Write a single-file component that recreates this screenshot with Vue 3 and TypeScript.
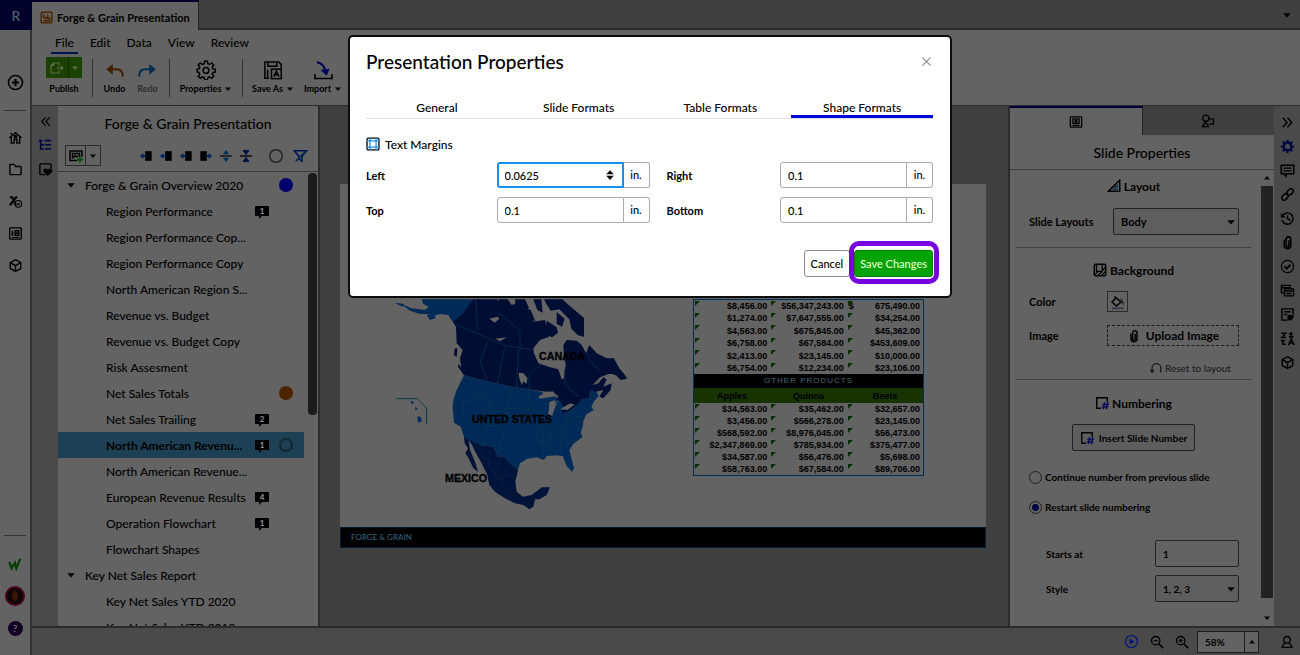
<script setup lang="ts">
import { h, ref } from 'vue'

const glyphs: Record<string, string> = {
  plus: '<circle cx="8" cy="8" r="6.600"/><path d="M8 4.800v6.400M4.800 8h6.400" stroke-width="2"/>',
  home: '<path d="M1.500 8.500 8 2.800l6.500 5.700M3.500 7.500V14h3v-4h3v4h3V7.500M3.500 5V2.800"/><path d="M7 6.200h2v2H7z" fill="currentColor"/>',
  folder: '<path d="M2 3.200q0-.7.7-.7h3.600l2 2.300h5q.7 0 .7.700v7.300q0 .7-.7.7H2.700q-.7 0-.7-.7z"/>',
  formula: '<path d="M2 3.500h2.500l4 8M9.500 2.500 2 12" stroke-width="2.200"/><circle cx="11" cy="10.500" r="3.600" stroke-width="1.200"/><path d="M9.500 10.500l1.200 1.200 2-2.200" stroke-width="1.200"/>',
  calendar: '<rect x="1.800" y="2" width="12.400" height="12" rx="1"/><path d="M4.800 5v5.500M7.800 5h3.700v5.200H7.800zM7.800 7.600h3.700" stroke-width="1.700"/><path d="M4 12.300h8" stroke-width="1"/>',
  cube: '<path d="M8 1.800 13.600 5v6.200L8 14.300l-5.600-3.100V5zM2.400 5 8 8.200 13.600 5M8 8.200v6.100"/>',
  left2: '<path d="M8 3 3.500 8 8 13M13 3 8.500 8l4.500 5"/>',
  right2: '<path d="M3 3l4.500 5L3 13M8 3l4.500 5L8 13"/>',
  tree: '<path d="M1 3h4M3 3v9.500h4M3 7.800h4M7.500 3H15M8 7.800h7M8 12.500h7" stroke-width="1.800"/>',
  heart: '<path d="M8 13.500H3q-1 0-1-1V3q0-1 1-1h10q1 0 1 1v4"/><path d="M10.500 14.800 6 10.600q-1.200-3 1.600-3.600 2-.2 2.900 1.500.9-1.700 2.900-1.500 2.800.6 1.600 3.600z" fill="currentColor" stroke="none"/>',
  slideAdd: '<path d="M9 12.500H2V3h12v6"/><path d="M4.500 10.500v-5h7v3.500M5 10l2-2.500 1.500 1.500 1.500-1.500"/><path d="M12 8.500v6M9 11.500h6" stroke="#0a4d0a" stroke-width="1.900"/>',
  inLeft: '<path d="M7 2.500h7.500v11H7z" fill="currentColor" stroke="none"/><path d="M8 8H4" stroke="#00245e" stroke-width="2"/><path d="M5 4.500v7L1 8z" fill="#00245e" stroke="none"/>',
  inRight: '<path d="M1.500 2.500H9v11H1.500z" fill="currentColor" stroke="none"/><path d="M8 8h4" stroke="#00245e" stroke-width="2"/><path d="M11 4.500v7L15 8z" fill="#00245e" stroke="none"/>',
  expand: '<path d="M1 8h14" stroke-width="1.300"/><path d="M8 1 11.500 6h-7zM8 15l3.500-5h-7z" fill="#003055" stroke="none"/>',
  collapse: '<path d="M1 8h14" stroke-width="1.500"/><path d="M8 7.500 4.500 2h7zM8 8.500 4.500 14h7z" fill="#00124f" stroke="none"/><path d="M4.500 2h7M4.500 14h7" stroke="#00124f"/>',
  circle: '<circle cx="8" cy="8" r="6.300" stroke="#222"/>',
  filter: '<path d="M1.500 3h13L9.500 9v5l-3-2.500V9z" stroke="#00124f" stroke-width="1.700"/><path d="M14 3 3 14" stroke="#003055" stroke-width="2"/>',
  undo: '<path d="M4 7h6q5 0 5 6" stroke-width="1.700"/><path d="M6.500 2.500v9L1 7z" fill="currentColor" stroke="none"/>',
  redo: '<path d="M12 7H6q-5 0-5 6" stroke-width="1.700"/><path d="M9.500 2.500v9L15 7z" fill="currentColor" stroke="none"/>',
  gear: '<path d="M6.900 1h2.200l.4 2 1.400.6 1.700-1.200 1.600 1.600-1.200 1.700.6 1.400 1.900.3v2.200l-1.900.4-.6 1.400 1.200 1.700-1.600 1.600-1.700-1.200-1.400.6-.4 1.900H6.900l-.4-1.900-1.400-.6-1.700 1.200-1.600-1.600L3 11.400 2.400 10 .9 9.600V7.400L2.400 7 3 5.700 1.800 4l1.600-1.600 1.700 1.200L6.500 3z" stroke-width="1.200"/><circle cx="8" cy="8.300" r="2.300" stroke-width="1.200"/>',
  gearSolid: '<circle cx="8" cy="8" r="4" stroke-width="2.500"/><path d="M8 1v2.500M8 12.500V15M1 8h2.500M12.500 8H15M3 3l1.800 1.800M11.200 11.200 13 13M13 3l-1.800 1.800M4.800 11.200 3 13" stroke-width="2.400"/>',
  save: '<path d="M5 14.500H1.500v-13h11l2 2V7M4 1.500V5h7V1.500" stroke-width="1.200"/><rect x="6.800" y="7.300" width="7.800" height="7.600" stroke-width="1.200"/><path d="M8.600 13.300 10.700 8.800l2.100 4.500M9.300 11.800h2.800M3.700 14V7.500" stroke-width="1.200"/>',
  import: '<path d="M.8 11v3.700h14.400V11" stroke-width="1.300"/><path d="M2.500 1Q8.500 2 9.500 8.500" stroke="#00005a" stroke-width="1.800"/><path d="M5.500 7.500 13 6.500l-2.300 6z" fill="#00005a" stroke="none"/>',
  publish: '<path d="M10 5.500V3H4.500L2 5.500V13h8v-2.500M4.500 3v2.500H2" stroke-width="1.200"/><path d="M8 8h5" stroke-width="1.300"/><path d="M12 5.500v5L15 8z" fill="currentColor" stroke="none"/>',
  slide: '<rect x="1.500" y="2.200" width="13" height="11.600" rx=".8"/><rect x="4.500" y="4.500" width="7" height="5"/><circle cx="8" cy="7" r="1"/><path d="M4 11.800h8"/>',
  shapes: '<circle cx="5.500" cy="4.800" r="3.600"/><path d="M5 9l-3.300 5.500h6.800L5 9M8.500 5.500h5.700v6H9"/>',
  comment: '<path d="M1.300 2.500h13.400v9H6.500V14L4 11.500H1.300z" stroke-width="1.600"/><path d="M3.500 5.400h9M3.500 8.400h9" stroke-width="1.400"/>',
  link: '<rect x="7" y="2.800" width="7.500" height="5" rx="2.500" transform="rotate(-45 10.700 5.300)" stroke-width="1.700"/><rect x="1.500" y="8.200" width="7.500" height="5" rx="2.500" transform="rotate(-45 5.200 10.700)" stroke-width="1.700"/>',
  history: '<path d="M2.500 5.500a6 6 0 1 1-.4 4M8 4.500V8l3 2"/><path d="M1 2v5h5z" fill="currentColor" stroke="none"/>',
  clip: '<path d="M4.500 5v6a3.500 3.500 0 0 0 7 0V4.500a2.500 2.500 0 0 0-5 0V11a1.500 1.500 0 0 0 3 0V5.500" stroke-width="1.700"/>',
  check: '<circle cx="8" cy="8" r="6.500" stroke-width="1.300"/><path d="M4.800 8l2.400 2.400 4-4.400" stroke-width="2"/>',
  copy: '<path d="M4 10.500H1.500v-8h9.500v2.300M1.500 5h9"/><rect x="4.700" y="6.200" width="9.800" height="7.500" rx="1"/><path d="M5 8.500h9M7 11.200h5"/>',
  note: '<path d="M8 14H2V2h12v6"/><path d="M4.500 5h7M4.500 8h3" /><path d="M8 8.500h6.500v3l-3 3L8 14z" fill="currentColor" stroke="none"/>',
  translate: '<path d="M1.500 2.500H6L2 7h4.500M9.500 3h4M12 1v6M9.500 6.500h5M3 9v5h3M1 10.500h4.500M9 15l3-6.500L15 15M10 12.800h4" stroke-width="1.600"/>',
  triangle: '<path d="M1.500 14h13V1.500z" stroke-width="1.700"/><path d="M7.500 11.800h4.200V7z" stroke="#0c3950" stroke-width="1.300"/><path d="M4 11.500v2M6.500 9v2M9 7v2" stroke-width="1"/>',
  background: '<rect x="1.500" y="1.500" width="13" height="13" rx="1.500" stroke-width="1.700"/><path d="M4 2v7.500h6.500V2M2.500 13l3.500-3.500M6 14l4.500-4.500M10 14l4-4M11 8l3-3" stroke-width="1.400"/>',
  bucket: '<path d="M4.500 2.500 11 8l-4.500 4L2 8l4.500-4.500" stroke-width="1.500"/><path d="M10.500 3.500q4 4 3.500 8-2.500-2-3.500-5z" fill="#2d2d3a" stroke="none"/><path d="M2 14.300h12" stroke="#3b3b48" stroke-width="2"/>',
  reset: '<path d="M3.500 13V8a4.800 4.800 0 0 1 10 0v5"/><path d="M.5 10h6l-3 4z" fill="currentColor" stroke="none"/>',
  number: '<path d="M7 14H2V2h12v4.500" stroke-width="1.600"/><path d="M9.500 15l1.500-8M13 15l1.500-8M8.300 9.500H16M7.800 12.500h7.500" stroke="#00005a" stroke-width="1.500"/>',
  play: '<circle cx="8" cy="8" r="6.400" stroke-width="1.300"/><path d="M6 4.800v6.400L11.200 8z" fill="currentColor" stroke="none"/>',
  zoomOut: '<circle cx="6.500" cy="6.500" r="4.800"/><path d="M10 10l5 5" stroke-width="2"/><path d="M4.300 6.500h4.400" stroke-width="1.500"/>',
  zoomIn: '<circle cx="6.500" cy="6.500" r="4.800"/><path d="M10 10l5 5" stroke-width="2"/><path d="M4.300 6.500h4.400M6.500 4.300v4.400" stroke-width="1.500"/>',
  person: '<circle cx="8" cy="5.500" r="3.800"/><path d="M5.500 9 2.500 13v1.200h11V13l-3-4"/>',
  margins: '<rect x="1.200" y="1.200" width="13.600" height="13.600" rx="1.500" stroke-width="1.500"/><path d="M4.500 1v14M11.500 1v14M1 4.500h14M1 11.500h14" stroke="#1a93ee" stroke-width="1.500"/>',
  close: '<path d="M3 3l10 10M13 3 3 13" stroke-width="1.300"/>',
  down: '<path d="M2 5h12L8 12z" fill="currentColor" stroke="none"/>',
  up: '<path d="M2 11h12L8 4z" fill="currentColor" stroke="none"/>',
  spin: '<path d="M3 7h10L8 1.500zM3 9h10l-5 5.500z" fill="currentColor" stroke="none"/>',
  doc: '<rect x="1.500" y="1.500" width="13" height="13" rx="1" stroke-width="1.800"/><path d="M4.500 4v4h5V4M6 9h6v3H4" stroke-width="2"/>',
  brand: '<path d="M1.500 5.500 4 13l4-6.500L9.500 13 14 2" stroke-width="2.400"/>',
}

const Icon = (p: { name: string; size?: number }) =>
  h('svg', {
    viewBox: '0 0 16 16',
    width: p.size ?? 14,
    height: p.size ?? 14,
    fill: 'none',
    stroke: 'currentColor',
    'stroke-width': 1.5,
    'aria-hidden': 'true',
    innerHTML: glyphs[p.name],
  })
Icon.props = ['name', 'size']

const menus = ['File', 'Edit', 'Data', 'View', 'Review']
const railIcons = ['home', 'folder', 'formula', 'calendar', 'cube']
const outlineIcons = ['inLeft', 'inLeft', 'inLeft', 'inRight', 'expand', 'collapse']
const rightIcons = ['right2', 'gearSolid', 'comment', 'link', 'history', 'clip', 'check', 'copy', 'note', 'translate', 'cube']

interface Row {
  label: string
  section?: boolean
  notes?: number
  dot?: 'blue' | 'orange' | 'ring'
  active?: boolean
}
const rows: Row[] = [
  { label: 'Forge & Grain Overview 2020', section: true, dot: 'blue' },
  { label: 'Region Performance', notes: 1 },
  { label: 'Region Performance Cop...' },
  { label: 'Region Performance Copy' },
  { label: 'North American Region S...' },
  { label: 'Revenue vs. Budget' },
  { label: 'Revenue vs. Budget Copy' },
  { label: 'Risk Assesment' },
  { label: 'Net Sales Totals', dot: 'orange' },
  { label: 'Net Sales Trailing', notes: 2 },
  { label: 'North American Revenu...', notes: 1, dot: 'ring', active: true },
  { label: 'North American Revenue...' },
  { label: 'European Revenue Results', notes: 4 },
  { label: 'Operation Flowchart', notes: 1 },
  { label: 'Flowchart Shapes' },
  { label: 'Key Net Sales Report', section: true },
  { label: 'Key Net Sales YTD 2020' },
  { label: 'Key Net Sales YTD 2019' },
]

const upper = [
  ['$8,456.00', '$56,347,243.00', '675,490.00'],
  ['$1,274.00', '$7,647,555.00', '$34,254.00'],
  ['$4,563.00', '$675,845.00', '$45,362.00'],
  ['$6,758.00', '$67,584.00', '$453,609.00'],
  ['$2,413.00', '$23,145.00', '$10,000.00'],
  ['$6,754.00', '$12,234.00', '$23,106.00'],
]
const lower = [
  ['$34,563.00', '$35,462.00', '$32,657.00'],
  ['$3,456.00', '$566,278.00', '$23,145.00'],
  ['$568,592.00', '$8,976,045.00', '$56,473.00'],
  ['$2,347,869.00', '$785,934.00', '$375,477.00'],
  ['$34,587.00', '$56,476.00', '$5,698.00'],
  ['$58,763.00', '$67,584.00', '$89,706.00'],
]

const tabs = ['General', 'Slide Formats', 'Table Formats', 'Shape Formats']
const activeTab = ref('Shape Formats')
const margins = ref([
  { label: 'Left', value: '0.0625', focused: true },
  { label: 'Right', value: '0.1', focused: false },
  { label: 'Top', value: '0.1', focused: false },
  { label: 'Bottom', value: '0.1', focused: false },
])
const numbering = ref('restart')
const startsAt = ref('1')
const zoom = ref('58%')
</script>

<template>
  <div class="app">
    <nav class="rail">
      <div class="logo">R</div>
      <button class="ib add" aria-label="Create"><Icon name="plus" :size="17" /></button>
      <div class="rail-group">
        <button v-for="n in railIcons" :key="n" class="ib" :aria-label="n"><Icon :name="n" :size="15" /></button>
      </div>
      <div class="rail-foot">
        <button class="ib brand" aria-label="Workspace"><Icon name="brand" :size="14" /></button>
        <button class="ib" aria-label="Account"><span class="avatar"></span></button>
        <button class="ib" aria-label="Help"><span class="help">?</span></button>
      </div>
    </nav>

    <div class="main">
      <div class="tabbar">
        <a class="doc-tab" href="#"><Icon class="doc-icon" name="doc" :size="13" />Forge &amp; Grain Presentation</a>
        <button class="ib tab-more" aria-label="More tabs"><Icon name="down" :size="10" /></button>
      </div>

      <header class="ribbon">
        <nav class="menus">
          <a v-for="m in menus" :key="m" href="#" :class="{ on: m === 'File' }">{{ m }}</a>
        </nav>
        <div class="tools">
          <button class="tool publish"><span class="pub"><Icon name="publish" :size="16" /><i></i><Icon name="down" :size="8" /></span>Publish</button>
          <hr />
          <button class="tool small undo"><span class="pic"><Icon name="undo" :size="19" /></span>Undo</button>
          <button class="tool small redo"><span class="pic"><Icon name="redo" :size="19" /></span>Redo</button>
          <hr />
          <button class="tool props"><span class="pic"><Icon name="gear" :size="20" /></span><span class="cap">Properties <Icon name="down" :size="8" /></span></button>
          <hr />
          <button class="tool wide"><span class="pic"><Icon name="save" :size="20" /></span><span class="cap">Save As <Icon name="down" :size="8" /></span></button>
          <button class="tool wide"><span class="pic"><Icon name="import" :size="19" /></span><span class="cap">Import <Icon name="down" :size="8" /></span></button>
        </div>
      </header>

      <div class="work">
        <aside class="strip">
          <button class="ib" aria-label="Collapse outline"><Icon name="left2" :size="13" /></button>
          <button class="ib navy" aria-label="Outline"><Icon name="tree" :size="14" /></button>
          <button class="ib" aria-label="Favorites"><Icon name="heart" :size="15" /></button>
        </aside>

        <section class="outline">
          <h2>Forge &amp; Grain Presentation</h2>
          <div class="outline-tools">
            <div class="split">
              <button aria-label="Add slide"><Icon name="slideAdd" :size="16" /></button>
              <button aria-label="Add slide options"><Icon name="down" :size="8" /></button>
            </div>
            <div class="moves">
              <button v-for="(n, i) in outlineIcons" :key="i" class="ib" aria-label="Arrange slide"><Icon :name="n" :size="14" /></button>
            </div>
            <button class="ib status" aria-label="Status"><Icon name="circle" :size="16" /></button>
            <button class="ib" aria-label="Filter"><Icon name="filter" :size="15" /></button>
          </div>
          <div class="tree-wrap">
            <ul class="tree">
              <li v-for="r in rows" :key="r.label" :class="{ section: r.section, active: r.active }">
                <Icon v-if="r.section" class="twist" name="down" :size="10" />
                <a href="#">{{ r.label }}</a>
                <span v-if="r.notes" class="note">{{ r.notes }}</span>
                <span v-if="r.dot" class="dot" :class="r.dot"></span>
              </li>
            </ul>
            <div class="thumb"></div>
          </div>
        </section>

        <main class="canvas">
          <div class="slide">
            <svg class="map" viewBox="0 0 780 690" width="260" height="230" role="img" aria-label="North America">
              <g fill="#002b58">
                <path d="M95 28H250L235 50 200 95 185 92 175 75 150 72 130 78 112 72 90 72 60 62 30 40 62 54 105 60 116 50 100 42Z" />
                <path d="M14 38l28 4-4 8zM110 76l20-4 8 12-18 6z" />
                <path d="M222 256L300 276 365 290 420 298 455 306 470 318 492 316 505 326 495 340 480 350 474 372 486 378 496 350 502 332 518 338 522 358 515 372 540 362 568 340 575 328 598 325 600 300 615 296 626 318 612 334 604 352 612 360 590 372 580 392 578 410 572 428 578 440 550 462 538 480 545 508 552 535 546 545 530 528 518 498 500 496 470 498 462 510 440 502 412 506 390 520 384 540 360 520 345 500 326 502 308 470 275 466 240 450 222 440 212 410 192 398 188 350 190 330 200 300Z" />
                <path d="M62 332l10 4-6 8zM76 350l8 8-8 2zM82 378l10 4 4 12-12 4z" />
              </g>
              <g fill="#000e34">
                <path d="M250 28L320 28 350 50 380 40 405 60 430 95 465 90 470 110 478 140 450 150 430 175 432 190 445 220 480 232 505 238 515 268 522 265 524 240 528 225 522 205 520 165 530 150 560 152 575 165 588 190 598 165 620 190 650 205 672 205 690 240 682 250 655 252 630 262 608 285 625 280 640 262 650 268 640 290 665 280 662 300 640 325 628 320 640 300 618 305 600 300 598 325 575 328 568 340 540 362 515 372 520 350 512 335 500 330 505 318 480 306 455 304 420 298 365 290 300 276 222 256 214 235 210 205 218 180 200 160 198 110 188 95 215 75Z" />
                <path d="M194 176l8-2-2 26-8-4zM206 222l22 30-6 4-18-26z" />
                <path d="M325 28h28l20 28-14 14-24-16zM375 28h30l12 26-20 10-20-14zM400 50l22 10 14 34-26-6zM430 28h24l4 40-16-8zM462 28h55l20 18 45 38v56l-18-4-20-20-6-28-30-30-26 4-14-22zM470 92l30 20 4 16-18 14-20-10zM500 66l24 20-8 24-16-8z" />
                <path d="M658 250l24-22 22 26 8 12-20 4-14-14z" />
              </g>
              <g fill="#636363">
                <path d="M298 86l24-6 6 6-14 12zM316 146l34-4-20 12zM386 248l14 2 12 14-2 18-10-8-4 12-8-20z" />
                <path d="M444 322l22-16 22-2 14 14-26 4-24 4zM478 336l18-6-10 46-10-6zM510 358l30-18 14 4-22 16z" />
              </g>
              <path fill="#001338" d="M222 440L240 450 275 466 308 470 326 502 345 500 360 520 384 540 376 575 380 605 398 620 425 615 445 600 455 592 480 592 470 615 448 628 435 628 430 650 418 658 400 645 375 640 345 625 315 605 298 585 292 555 275 520 258 490 246 465 236 450 240 480 255 515 264 545 250 535 236 505 226 490 234 475 224 460Z" />
              <path fill="none" stroke="#07384e" stroke-width="2" d="M258 28l4 94M198 105l66 26 82 36 80 12M330 72l60 50v58M292 156l-22 60 22 56M344 174l-22 108M386 176l-6 116M452 224l-34 32v42M526 222l-2 60 40 36M594 190l6 24 28 26M196 326l58 12 82 16 84 4M254 280l-6 56M220 336l-4 34 32 56M282 276v48l22 8M362 292l-14 112M416 298v108M302 324l-8 82M250 400l96 10 94 4M340 410l-8 80M294 406l-12 56M420 340h48M420 376h60M440 414l70-4 60-14M440 414v40l40 4M448 442h88M484 414l-4 80M510 430l4 62M546 416l-18 26 6 40M520 386l54-6M560 352l20 30M536 370l-14 60M252 322h56M346 380h72M296 364h50M358 320h58M456 380l4 116M500 380l-14 34M556 402l16 20" />
              <path fill="none" stroke="#062a42" stroke-width="2" d="M264 466l20 40 36 14M300 480l-4 50 40 40M330 510l-16 50 50 50M350 530l-20 70M374 550l-60 20" />
              <path fill="none" stroke="#0c3d4a" stroke-width="3" d="M20 326h62l28 28v48" />
              <g class="countries">
                <text x="447" y="209">CANADA</text>
                <text x="246" y="398">UNTED STATES</text>
                <text x="165" y="577">MEXICO</text>
              </g>
            </svg>

            <table class="figures">
              <tbody class="upper">
                <tr v-for="(r, i) in upper" :key="i">
                  <td v-for="(c, j) in r" :key="j"><b v-if="i === 0 && j === 2">$</b>{{ c }}</td>
                </tr>
              </tbody>
              <tbody>
                <tr class="band"><th colspan="3">OTHER PRODUCTS</th></tr>
                <tr class="heads"><th>Apples</th><th>Quinoa</th><th>Beets</th></tr>
                <tr v-for="(r, i) in lower" :key="i">
                  <td v-for="(c, j) in r" :key="j">{{ c }}</td>
                </tr>
              </tbody>
            </table>
            <footer>FORGE &amp; GRAIN</footer>
          </div>
        </main>

        <section class="panel">
          <div class="panel-tabs">
            <button class="on" aria-label="Slide"><Icon name="slide" :size="14" /></button>
            <button aria-label="Shapes"><Icon name="shapes" :size="14" /></button>
          </div>
          <h2>Slide Properties</h2>
          <div class="panel-body">
            <form class="fields" @submit.prevent>
              <h3><Icon name="triangle" :size="14" />Layout</h3>
              <div class="field layout">
                <label for="layouts">Slide Layouts</label>
                <span class="select"><select id="layouts"><option>Body</option></select><Icon name="down" :size="10" /></span>
              </div>
              <hr />
              <h3 class="bg"><Icon name="background" :size="14" />Background</h3>
              <div class="field color">
                <label for="color">Color</label>
                <span class="slot"><button id="color" class="swatch"><Icon name="bucket" :size="16" /></button></span>
              </div>
              <div class="field image">
                <label for="upload">Image</label>
                <button id="upload" class="upload slot"><Icon name="clip" :size="14" />Upload Image</button>
              </div>
              <a class="reset" href="#"><Icon name="reset" :size="14" />Reset to layout</a>
              <hr />
              <h3 class="num"><Icon name="number" :size="14" />Numbering</h3>
              <button class="insert"><Icon name="number" :size="14" />Insert Slide Number</button>
              <label class="radio"><input v-model="numbering" type="radio" value="continue" />Continue number from previous slide</label>
              <label class="radio"><input v-model="numbering" type="radio" value="restart" />Restart slide numbering</label>
              <div class="field sub starts">
                <label for="starts">Starts at</label>
                <input id="starts" v-model="startsAt" type="text" />
              </div>
              <div class="field sub">
                <label for="style">Style</label>
                <span class="select"><select id="style"><option>1, 2, 3</option></select><Icon name="down" :size="10" /></span>
              </div>
            </form>
            <div class="scroll"><Icon name="up" :size="8" /><div></div><Icon name="down" :size="8" /></div>
          </div>
        </section>

        <aside class="strip right">
          <button v-for="n in rightIcons" :key="n" class="ib" :class="{ navy: n === 'gearSolid' }" :aria-label="n"><Icon :name="n" :size="15" /></button>
        </aside>
      </div>

      <footer class="statusbar">
        <button class="ib play" aria-label="Present"><Icon name="play" :size="15" /></button>
        <button class="ib" aria-label="Zoom out"><Icon name="zoomOut" :size="14" /></button>
        <button class="ib" aria-label="Zoom in"><Icon name="zoomIn" :size="14" /></button>
        <span class="zoom"><input v-model="zoom" aria-label="Zoom" type="text" /><button aria-label="Zoom levels"><Icon name="up" :size="8" /></button></span>
        <button class="ib person" aria-label="Collaborators"><Icon name="person" :size="14" /></button>
      </footer>
    </div>

    <div class="overlay">
      <form class="dialog" role="dialog" aria-labelledby="dlg-title" @submit.prevent>
        <div class="dialog-head">
          <h1 id="dlg-title">Presentation Properties</h1>
          <button type="button" class="ib close" aria-label="Close"><Icon name="close" :size="13" /></button>
        </div>
        <div class="tabs" role="tablist">
          <button v-for="t in tabs" :key="t" type="button" role="tab" :class="{ on: t === activeTab }" @click="activeTab = t">{{ t }}</button>
        </div>
        <h2><Icon name="margins" :size="14" />Text Margins</h2>
        <div class="margins">
          <div v-for="m in margins" :key="m.label" class="margin">
            <label :for="'m-' + m.label">{{ m.label }}</label>
            <span class="measure" :class="{ focused: m.focused }">
              <input :id="'m-' + m.label" v-model="m.value" type="text" />
              <Icon v-if="m.focused" class="spin" name="spin" :size="12" />
              <span class="unit">in.</span>
            </span>
          </div>
        </div>
        <div class="actions">
          <button type="button" class="cancel">Cancel</button>
          <button type="submit" class="save">Save Changes</button>
        </div>
      </form>
    </div>
  </div>
</template>

<style>
body {
  background: #636363;
}
</style>

<style scoped>
* {
  box-sizing: border-box;
}
.app {
  position: relative;
  display: flex;
  height: 100vh;
  overflow: hidden;
  font-family: Lato, "Liberation Sans", sans-serif;
  font-size: 12px;
  font-weight: 500;
  color: #000;
  background: #636363;
}
button,
input,
select {
  margin: 0;
  padding: 0;
  border: 0;
  font: inherit;
  color: inherit;
  background: none;
}
a {
  color: inherit;
  text-decoration: none;
}
h1,
h2,
h3,
ul {
  margin: 0;
  padding: 0;
  font-weight: inherit;
}
svg {
  display: block;
  flex: none;
}
.ib {
  display: flex;
  align-items: center;
  justify-content: center;
  flex: none;
}
.navy {
  color: #000642;
}

/* left rail */
.rail {
  display: flex;
  flex-direction: column;
  flex: none;
  width: 32px;
  border-right: 2px solid #333;
}
.logo {
  display: flex;
  align-items: center;
  justify-content: center;
  width: 32px;
  height: 30px;
  background: #00002a;
  color: #4c6470;
  font-size: 14px;
}
.add {
  height: 80px;
  margin: 12px 4px 0;
}
.rail-group {
  display: flex;
  flex-direction: column;
  margin: -12px 4px 0;
  padding-top: 10px;
  border-top: 1px solid #333;
}
.rail-group .ib {
  height: 32px;
}
.rail-foot {
  margin: auto 4px 11px;
  padding-top: 12px;
  border-top: 1px solid #333;
}
.rail-foot .ib {
  width: 100%;
  height: 32px;
}
.brand {
  color: #003d00;
}
.avatar {
  width: 20px;
  height: 20px;
  border: 2px solid #4d0020;
  border-radius: 50%;
  background: radial-gradient(ellipse 4px 7px, #3a1608 0 50%, #0d0505 100%);
}
.help {
  width: 15px;
  height: 15px;
  border-radius: 50%;
  background: #110022;
  color: #8a8a8a;
  font-size: 10px;
  line-height: 15px;
}

.main {
  display: flex;
  flex-direction: column;
  flex: 1;
  min-width: 0;
}
.tabbar {
  display: flex;
  align-items: stretch;
  justify-content: space-between;
  flex: none;
  height: 30px;
  background: #404040;
  box-shadow: inset 0 -2px #2b2b2b;
}
.doc-tab {
  display: flex;
  align-items: center;
  gap: 4px;
  padding: 2px 8px 0;
  border-top: 2px solid #00002a;
  border-right: 1px solid #222;
  background: #636363;
  font-size: 11px;
  font-weight: 700;
}
.doc-icon {
  color: #4a2700;
}
.tab-more {
  width: 26px;
}

.ribbon {
  flex: none;
  height: 76px;
  border-bottom: 1px solid #2b2b2b;
}
.menus {
  display: flex;
  gap: 16px;
  padding: 4px 0 0 23px;
  line-height: 17px;
}
.menus a {
  height: 20px;
}
.menus .on {
  margin: 0 -4px;
  padding: 0 4px;
  border-bottom: 2px solid #001450;
}
.tools {
  display: flex;
  padding: 3px 0 0 14px;
  font-size: 9px;
  font-weight: 700;
}
.tools hr {
  width: 1px;
  height: 38px;
  margin: 2px 5px 0;
  border: 0;
  background: #333;
}
.tool {
  display: flex;
  flex-direction: column;
  align-items: center;
  line-height: 11px;
}
.publish {
  width: 36px;
  margin-right: 5px;
}
.small {
  width: 33px;
}
.props {
  width: 62px;
}
.wide {
  width: 50px;
}
.pub {
  display: flex;
  align-items: center;
  justify-content: space-evenly;
  width: 36px;
  height: 21px;
  margin-bottom: 5px;
  background: #1c4200;
  color: #5d6d50;
}
.pub i {
  width: 1px;
  height: 21px;
  background: #122c00;
}
.pic {
  display: flex;
  align-items: center;
  height: 26px;
}
.cap {
  display: flex;
  align-items: center;
  gap: 3px;
  white-space: nowrap;
}
.undo .pic {
  color: #422000;
}
.redo {
  color: #2e2e2e;
}
.redo .pic {
  color: #002c4d;
}

.work {
  display: flex;
  flex: 1;
  min-height: 0;
}
.strip {
  flex: none;
  width: 26px;
  padding-top: 3px;
  background: #4a4a4a;
}
.strip.right {
  padding-top: 4px;
}
.strip .ib {
  width: 100%;
  height: 24px;
}
.outline {
  display: flex;
  flex-direction: column;
  flex: none;
  width: 262px;
  border-right: 2px solid #2b2b2b;
  background: #636363;
}
.outline h2 {
  padding-top: 9px;
  font-size: 14px;
  line-height: 18px;
  text-align: center;
}
.outline-tools {
  display: flex;
  align-items: center;
  height: 38px;
  padding: 7px 10px 0 7px;
}
.split {
  display: flex;
  border: 1px solid #2b2b2b;
}
.split button {
  display: flex;
  align-items: center;
  justify-content: center;
  width: 14px;
  height: 19px;
}
.split button:first-child {
  width: 20px;
  border-right: 1px solid #2b2b2b;
}
.moves {
  display: flex;
  gap: 6px;
  margin-left: auto;
  margin-right: 15px;
}
.status {
  margin-right: 9px;
}
.tree-wrap {
  display: flex;
  flex: 1;
  min-height: 0;
  border-top: 1px solid #3b3b3b;
}
.tree {
  flex: 1;
  overflow: hidden;
  list-style: none;
}
.tree li {
  display: flex;
  align-items: center;
  height: 26px;
  padding-left: 48px;
  padding-right: 11px;
}
.tree .section {
  padding-left: 8px;
}
.twist {
  margin-right: 9px;
}
.tree a {
  flex: 1;
  width: 0;
  white-space: nowrap;
}
.tree .active {
  background: #1d4054;
  font-weight: 700;
}
.note {
  position: relative;
  flex: none;
  width: 14px;
  height: 10px;
  margin-right: 24px;
  border-radius: 1px;
  background: #000;
  color: #999;
  font-size: 8px;
  font-weight: 700;
  line-height: 10px;
  text-align: center;
}
.note::after {
  position: absolute;
  top: 10px;
  left: 4px;
  border: 3px solid transparent;
  border-top-color: #000;
  border-left-width: 0;
  content: "";
}
.active .note {
  margin-right: 10px;
}
.dot {
  flex: none;
  width: 14px;
  height: 14px;
  border-radius: 50%;
}
.blue {
  background: #00006a;
}
.orange {
  background: #4d2400;
}
.ring {
  border: 2px solid #132733;
}
.thumb {
  width: 9px;
  height: 242px;
  margin: 1px 1px 0 4px;
  border-radius: 4px;
  background: #1c1c1c;
}

.canvas {
  flex: 1;
  min-width: 0;
  padding: 78px 22px 0 20px;
  background: #404040;
}
.slide {
  position: relative;
  height: 364px;
  background: #636363;
}
.map {
  position: absolute;
  top: 106px;
  left: 50px;
}
.countries {
  font: bold 32px "Liberation Sans", sans-serif;
  fill: #000;
  stroke: #000;
  stroke-width: 1;
}
.figures {
  position: absolute;
  right: 62px;
  bottom: 72px;
  width: 231px;
  border: 1px solid #002f55;
  border-collapse: collapse;
  table-layout: fixed;
  font: bold 9px/12px "Liberation Sans", sans-serif;
}
.figures td {
  position: relative;
  height: 12px;
  padding: 0 3px 0 2px;
  text-align: right;
}
.upper tr:nth-child(odd) td {
  height: 13px;
}
.figures td::before {
  position: absolute;
  top: 1px;
  left: 1px;
  border-top: 5px solid #0b2e00;
  border-right: 5px solid transparent;
  content: "";
}
.figures td b {
  float: left;
}
.figures th {
  padding: 0;
}
.band th {
  height: 14px;
  background: #000;
  color: #4c6674;
  font-size: 8px;
  font-weight: 400;
  letter-spacing: 1px;
}
.heads th {
  height: 15px;
  background: #163300;
}
.slide footer {
  position: absolute;
  right: 0;
  bottom: 0;
  left: 0;
  height: 21px;
  padding-left: 10px;
  border: 1px solid #001c30;
  background: #000;
  color: #33627c;
  font-size: 8px;
  line-height: 18px;
}

.panel {
  display: flex;
  flex-direction: column;
  flex: none;
  width: 266px;
  border-left: 2px solid #2b2b2b;
  background: #636363;
}
.panel-tabs {
  display: flex;
}
.panel-tabs button {
  display: flex;
  align-items: center;
  justify-content: center;
  flex: 1;
  height: 29px;
  background: #404040;
}
.panel-tabs .on {
  border-top: 2px solid #00003a;
  border-right: 1px solid #222;
  background: #636363;
}
.panel h2 {
  height: 35px;
  border-bottom: 1px solid #3b3b3b;
  font-size: 14px;
  line-height: 36px;
  text-align: center;
}
.panel-body {
  display: flex;
  flex: 1;
  min-height: 0;
}
.fields {
  display: flex;
  flex-direction: column;
  flex: 1;
  padding: 7px 9px 0 6px;
  overflow: hidden;
  font-size: 11px;
}
.fields h3 {
  display: flex;
  align-items: center;
  justify-content: center;
  gap: 3px;
  height: 18px;
  font-size: 12px;
  font-weight: 700;
}
.fields hr {
  flex: none;
  width: 100%;
  height: 1px;
  margin: 0;
  border: 0;
  background: #404040;
}
.field {
  display: flex;
  align-items: center;
  justify-content: space-between;
  padding: 0 12px 0 13px;
  font-weight: 700;
}
.layout {
  margin: 13px 0 12px;
}
.select {
  position: relative;
  display: flex;
  width: 126px;
}
.select select {
  width: 100%;
  height: 27px;
  padding-left: 7px;
  appearance: none;
  border: 1px solid #222;
  border-radius: 2px;
  background: #5e5e5e;
}
.select svg {
  position: absolute;
  top: 9px;
  right: 3px;
}
.slot {
  width: 132px;
}
.fields .bg {
  margin: 13px 0 12px;
}
.swatch {
  display: flex;
  align-items: center;
  justify-content: center;
  width: 21px;
  height: 21px;
  border: 1px solid #2b2b2b;
}
.color {
  margin-bottom: 13px;
}
.upload {
  display: flex;
  align-items: center;
  justify-content: center;
  gap: 5px;
  height: 21px;
  border: 1px dashed #1c1c1c;
  font-size: 12px;
}
.reset {
  display: flex;
  align-items: center;
  justify-content: flex-end;
  gap: 2px;
  height: 18px;
  margin: 13px 20px 2px 0;
  font-size: 10px;
  color: #1c1c1c;
}
.fields .num {
  margin: 14px 0 12px;
}
.insert {
  display: flex;
  align-items: center;
  align-self: center;
  gap: 5px;
  height: 27px;
  margin-bottom: 16px;
  padding: 0 7px;
  border: 1px solid #222;
  border-radius: 2px;
  background: #5e5e5e;
  font-size: 10px;
  font-weight: 700;
}
.radio {
  display: flex;
  align-items: center;
  gap: 3px;
  height: 20px;
  margin: 0 0 10px 13px;
  font-size: 10px;
  font-weight: 700;
  white-space: nowrap;
}
.radio input {
  width: 13px;
  height: 13px;
  appearance: none;
  border: 1px solid #222;
  border-radius: 50%;
}
.radio input:checked {
  background: radial-gradient(circle, #000040 0 3px, transparent 4px);
}
.sub {
  padding-left: 30px;
  font-size: 10px;
}
.starts {
  margin: 13px 0 8px;
}
.sub .select,
.sub input {
  width: 84px;
}
.sub input {
  height: 27px;
  padding-left: 7px;
  border: 1px solid #222;
  border-radius: 2px;
}
.scroll {
  display: flex;
  flex-direction: column;
  align-items: center;
  width: 14px;
  padding: 4px 0;
}
.scroll div {
  flex: 1;
  width: 12px;
  margin: 4px 0 16px;
  background: #222;
}

.statusbar {
  display: flex;
  align-items: center;
  justify-content: flex-end;
  flex: none;
  gap: 11px;
  height: 29px;
  padding-right: 6px;
  border-top: 2px solid #2b2b2b;
  background: #4a4a4a;
}
.play {
  color: #00147a;
}
.zoom {
  display: flex;
  width: 62px;
  height: 22px;
  margin-left: -3px;
  border: 1px solid #1c1c1c;
  background: #636363;
  font-size: 10px;
  font-weight: 700;
}
.zoom input {
  flex: 1;
  width: 0;
  padding-left: 7px;
}
.zoom button {
  display: flex;
  align-items: center;
  justify-content: center;
  width: 14px;
  border-left: 1px solid #1c1c1c;
}
.person {
  margin-left: 10px;
}

/* dialog */
.overlay {
  position: absolute;
  inset: 0;
  display: flex;
  align-items: flex-start;
  justify-content: center;
  padding-top: 35px;
}
.dialog {
  width: 604px;
  padding: 11px 17px 19px 16px;
  border: 2px solid #0d0d0d;
  border-radius: 5px;
  background: #fff;
}
.dialog-head {
  display: flex;
  align-items: center;
  justify-content: space-between;
  height: 26px;
}
.dialog h1 {
  font-size: 19px;
}
.close {
  color: #888;
}
.tabs {
  display: flex;
  margin-top: 20px;
  border-bottom: 1px solid #ddd;
}
.tabs button {
  flex: 1;
  height: 24px;
  padding-top: 3px;
}
.tabs .on {
  margin-bottom: -1px;
  padding-top: 5px;
  border-bottom: 3px solid #0008d8;
}
.dialog h2 {
  display: flex;
  align-items: center;
  gap: 5px;
  height: 20px;
  margin: 15px 0 8px;
  font-size: 12px;
}
.margins {
  display: grid;
  grid-template-columns: 1fr 1fr;
  row-gap: 9px;
}
.margin {
  display: flex;
  align-items: center;
  justify-content: space-between;
  font-size: 11px;
}
.margin label {
  font-weight: 700;
}
.margin:nth-child(even) {
  padding-left: 17px;
}
.measure {
  position: relative;
  display: flex;
  width: 153px;
  height: 26px;
}
.measure input {
  width: 127px;
  padding-left: 7px;
  border: 1px solid #aaa;
  border-radius: 3px 0 0 3px;
  outline: 0;
}
.unit {
  flex: 1;
  border: 1px solid #aaa;
  border-left: 0;
  border-radius: 0 3px 3px 0;
  line-height: 24px;
  text-align: center;
}
.measure.focused input {
  padding-left: 6px;
  border: 2px solid #1590f0;
}
.spin {
  position: absolute;
  top: 7px;
  right: 34px;
}
.actions {
  display: flex;
  justify-content: flex-end;
  gap: 4px;
  margin-top: 27px;
  font-size: 11px;
}
.actions button {
  height: 27px;
  padding: 0 6px;
  border: 1px solid #888;
  border-radius: 3px;
}
.actions .save {
  position: relative;
  padding: 0 5px;
  border-color: #0a7a0a;
  background: #04a304;
  color: #eaffd0;
}
.save::before {
  position: absolute;
  inset: -10px -7px -8px -6px;
  border: 5px solid #7700e0;
  border-radius: 10px;
  content: "";
}
</style>
